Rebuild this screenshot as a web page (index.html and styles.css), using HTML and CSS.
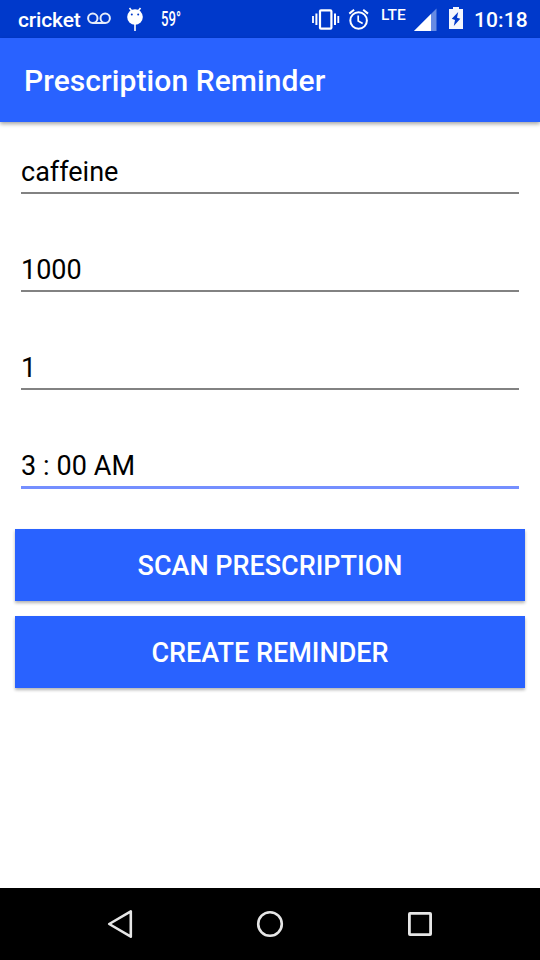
FILE: index.html
```html
<!DOCTYPE html>
<html lang="en">
<head>
<meta charset="utf-8">
<title>Prescription Reminder</title>
<link rel="stylesheet" href="styles.css">
</head>
<body>
<header class="status">
  <span class="carrier">cricket</span>
  <svg class="voicemail" width="26" height="38" viewBox="0 0 26 38" fill="none" stroke="#e6ecfa" stroke-width="2"><circle cx="5.8" cy="18.3" r="4.7"/><circle cx="18.2" cy="18.3" r="4.7"/><path d="M6 23h12.4"/></svg>
  <svg class="droid" width="20" height="38" viewBox="0 0 20 38"><path d="M4.5 8l3 4M15.5 8l-3 4M10 24v7" stroke="#fff" stroke-width="1.6"/><circle cx="10" cy="17" r="7.8" fill="#fff"/><circle cx="6.8" cy="14.5" r="1" fill="#0039cb"/><circle cx="13.2" cy="14.5" r="1" fill="#0039cb"/></svg>
  <span class="temp">59°</span>
  <span class="spacer"></span>
  <svg width="28" height="38" viewBox="0 0 28 38" fill="none" stroke="#fff"><rect x="8" y="10.3" width="11.4" height="18.4" rx="1" stroke-width="2.2"/><path d="M1 16v7M26.3 16v7" stroke-width="1.8"/><path d="M4.4 13.5v11.5M23 13.5v11.5" stroke-width="2"/></svg>
  <svg class="alarm" width="22" height="38" viewBox="0 0 22 38" fill="none" stroke="#fff" stroke-width="2"><circle cx="10.6" cy="20.5" r="8.3"/><path d="M1.3 13.6l4.8-3.8M20 13.6l-4.8-3.8"/><path d="M10.2 15.5v5.5l4.5 2.5" stroke-width="1.7"/></svg>
  <span class="network">LTE</span>
  <svg class="signal" width="23" height="38" viewBox="0 0 23 38"><path d="M0 31L22.5 8.5V31z" fill="#668be3"/><path d="M0 31L17 14V31z" fill="#fff"/></svg>
  <svg class="battery" width="14" height="38" viewBox="0 0 14 38"><path d="M0 9h4V7h6v2h4v20H0z" fill="#f4f6fd"/><path d="M9.2 12L2.8 18.8 6 20 4.8 26l6.5-7.2-3.3-1z" fill="#0039cb"/></svg>
  <span class="clock">10:18</span>
</header>
<div class="appbar"><h1>Prescription Reminder</h1></div>
<main>
  <form>
    <input class="field" type="text" aria-label="Medication" value="caffeine">
    <input class="field" type="text" aria-label="Dosage" value="1000">
    <input class="field" type="text" aria-label="Quantity" value="1">
    <input class="field active" type="text" aria-label="Time" value="3 : 00 AM">
    <button class="scan" type="button">SCAN PRESCRIPTION</button>
    <button type="button">CREATE REMINDER</button>
  </form>
</main>
<nav>
  <svg width="36" height="36" viewBox="0 0 36 36" fill="none" stroke="#e6e6e6" stroke-width="2.6" stroke-linejoin="round"><path d="M28.8 5.3v25.4L7.2 18z"/></svg>
  <svg width="36" height="36" viewBox="0 0 36 36" fill="none" stroke="#e6e6e6" stroke-width="2.6"><circle cx="18" cy="18" r="11.8"/></svg>
  <svg width="36" height="36" viewBox="0 0 36 36" fill="none" stroke="#e6e6e6" stroke-width="2.8"><rect x="7.4" y="7.4" width="21.2" height="21.2" rx=".6"/></svg>
</nav>
</body>
</html>
```
FILE: styles.css
```css
* { box-sizing: border-box; }
body {
  margin: 0;
  height: 960px;
  display: flex;
  flex-direction: column;
  background: #fff;
  font-family: Roboto, "Liberation Sans", sans-serif;
  overflow: hidden;
}
svg { display: block; flex: none; }
.status {
  height: 38px;
  flex: none;
  display: flex;
  align-items: center;
  padding: 0 12px 0 18px;
  background: #0039cb;
  color: #fff;
  white-space: nowrap;
}
.carrier { width: 69px; font-size: 21px; font-weight: 500; line-height: 38px; padding-top: 1px; letter-spacing: -.15px; }
.droid { margin-left: 12px; }
.temp { margin-left: 16px; font-size: 20.5px; line-height: 38px; width: 20px; transform: scaleX(.64); transform-origin: 0 50%; font-weight: 500; }
.spacer { flex: 1; }
.alarm { margin-left: 8px; }
.network { align-self: flex-start; margin: 6px 0 0 11px; width: 33px; font-size: 15.5px; font-weight: 500; line-height: 18px; }
.battery { margin-left: 12px; }
.clock { margin-left: 11px; width: 54px; font-size: 21px; font-weight: 500; line-height: 38px; padding-top: 1px; letter-spacing: .1px; }
.appbar {
  height: 84px;
  flex: none;
  display: flex;
  align-items: center;
  padding: 1px 24px 0;
  background: #2962ff;
  box-shadow: 0 2px 4px rgba(0, 0, 0, .36);
}
h1 { margin: 0; color: #fff; font-size: 30px; font-weight: 500; line-height: 36px; letter-spacing: .09px; }
main { flex: 1; padding: 23px 15px 0; }
form { display: flex; flex-direction: column; }
.field {
  height: 49px;
  margin: 0 6px 49px;
  padding: 7px 0 0;
  border: 0;
  border-bottom: 2px solid #828282;
  outline: 0;
  background: transparent;
  color: #000;
  font: 400 27px/32px Roboto, "Liberation Sans", sans-serif;
}
.active { height: 50px; border-bottom: 3px solid #758fff; margin-bottom: 40px; letter-spacing: .1px; }
button {
  height: 72px;
  margin: 0;
  padding: 2px 0 0;
  border: 0;
  background: #2962ff;
  box-shadow: 0 2px 3px rgba(0, 0, 0, .3);
  color: #fff;
  font: 500 27px/32px Roboto, "Liberation Sans", sans-serif;
}
.scan { margin-bottom: 15px; }
nav {
  height: 72px;
  flex: none;
  display: flex;
  align-items: center;
  justify-content: center;
  gap: 114px;
  background: #000;
}
```
